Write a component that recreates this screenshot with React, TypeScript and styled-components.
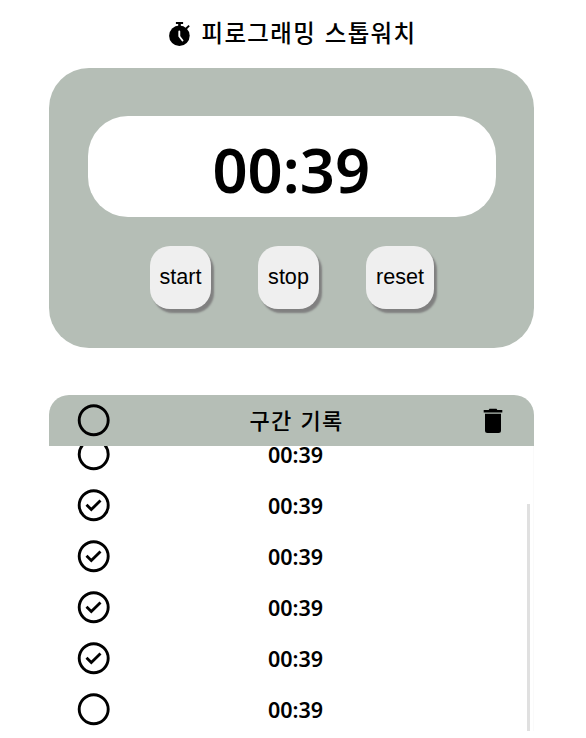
import React from "react";
import styled, { createGlobalStyle } from "styled-components";

const Global = createGlobalStyle`
  * { box-sizing: border-box; }
  html, body { margin: 0; background: #fff; overflow: hidden; }
  body { font-family: "Noto Sans", "Noto Sans CJK KR", sans-serif; color: #000; }
`;

const Page = styled.main`
  width: 586px;
  height: 738px;
  padding-left: 49px;
  overflow: hidden;
`;
const Title = styled.h1`
  display: flex;
  align-items: center;
  width: 485px;
  height: 68px;
  margin: 0;
  padding-left: 118px;
  font: 500 23.4px/65px "Noto Sans CJK KR", sans-serif;
  white-space: pre;
  svg { flex: none; margin-right: 10.5px; }
`;
const TitleText = styled.span`
  height: 68px;
  letter-spacing: 1.4px;
  word-spacing: 2px;
`;
const Watch = styled.section`
  width: 485px;
  height: 279.5px;
  padding: 48px 38px 0 38.5px;
  border-radius: 40px;
  background: #b5beb6;
`;
const Display = styled.div`
  height: 101px;
  padding-right: 1px;
  border-radius: 40px;
  background: #fff;
  text-align: center;
  font-size: 61.5px;
  font-weight: 600;
  line-height: 107px;
`;
const Buttons = styled.div`
  display: flex;
  gap: 47px;
  margin: 29px 0 0 62.5px;
`;
const Button = styled.button<{ $width: number }>`
  width: ${(p) => p.$width}px;
  height: 63px;
  padding: 0 0 2px;
  border: 0;
  border-radius: 20px;
  background: #efefef;
  box-shadow: 3px 4px 2px gray;
  color: #000;
  font: 21.6px "Liberation Sans", Arial, sans-serif;
`;
const Records = styled.section`
  width: 485px;
  margin-top: 47.5px;
`;
const RecordHeader = styled.header`
  display: grid;
  grid-template-columns: 88px 1fr 51px;
  align-items: center;
  height: 51px;
  padding-left: 28px;
  border-radius: 20px 20px 0 0;
  background: #b5beb6;
  svg { display: block; }
`;
const Heading = styled.h2`
  height: 51px;
  margin: 0;
  padding-right: 55px;
  text-align: center;
  font: 500 22px/49px "Noto Sans CJK KR", sans-serif;
  letter-spacing: 1.2px;
  word-spacing: 2px;
`;
const ListFrame = styled.div`
  display: flex;
  height: 285px;
  overflow: hidden;
  border-right: 1px solid #fafafa;
`;
const List = styled.ul`
  width: 478px;
  height: 285px;
  margin: 0;
  padding: 0;
  overflow: hidden;
  list-style: none;
`;
const Row = styled.li`
  display: flex;
  align-items: center;
  height: 51px;
  padding-left: 28px;
  &:first-child { margin-top: -17px; }
  svg { flex: none; }
`;
const Time = styled.span`
  width: 120px;
  margin-left: 125.5px;
  text-align: center;
  font-size: 21.5px;
  line-height: 24px;
  font-weight: 600;
`;
const Thumb = styled.div`
  width: 3px;
  height: 227px;
  margin-top: 58px;
  background: #e0e0e0;
`;

function CircleMark({ checked = false }: { checked?: boolean }) {
  return (
    <svg width="33" height="33" viewBox="0 0 33 33" fill="none" stroke="#000">
      <circle cx="16.7" cy="16.3" r="14.5" strokeWidth="2.9" />
      {checked && <path d="M9.5 15.8l4.8 4.8 9.2-9.2" strokeWidth="2.8" />}
    </svg>
  );
}

function StopwatchIcon() {
  return (
    <svg width="24" height="26" viewBox="0 0 24 26">
      <circle cx="12.4" cy="14.7" r="10.3" />
      <path d="M8.9 1h7.2v2h-2.3v3h-2.6V3H8.9zM18.3 7.1l3.2-3.2 1.3 1.3-3.2 3.2z" />
      <path d="M12.3 10.5v4.8l3.2 4.2" fill="none" stroke="#fff" strokeWidth="1.9" strokeLinecap="round" />
    </svg>
  );
}

function TrashIcon() {
  return (
    <svg width="20" height="26" viewBox="0 0 20 26">
      <path d="M.7 2h5L6.5.8h7L14.3 2h5v2.5H.7zM2 5.8h16v16.7a2.5 2.5 0 0 1-2.5 2.5h-11A2.5 2.5 0 0 1 2 22.5z" />
    </svg>
  );
}

const buttons = [
  { label: "start", width: 61 },
  { label: "stop", width: 61 },
  { label: "reset", width: 68 },
];
const records = [false, true, true, true, true, false];

export default function App() {
  return (
    <>
      <Global />
      <Page>
        <Title>
          <StopwatchIcon />
          <TitleText>피로그래밍 스톱워치</TitleText>
        </Title>
        <Watch>
          <Display>00:39</Display>
          <Buttons>
            {buttons.map((b) => (
              <Button key={b.label} $width={b.width}>{b.label}</Button>
            ))}
          </Buttons>
        </Watch>
        <Records>
          <RecordHeader>
            <CircleMark />
            <Heading>구간 기록</Heading>
            <TrashIcon />
          </RecordHeader>
          <ListFrame>
            <List>
              {records.map((checked, i) => (
                <Row key={i}>
                  <CircleMark checked={checked} />
                  <Time>00:39</Time>
                </Row>
              ))}
            </List>
            <Thumb />
          </ListFrame>
        </Records>
      </Page>
    </>
  );
}
